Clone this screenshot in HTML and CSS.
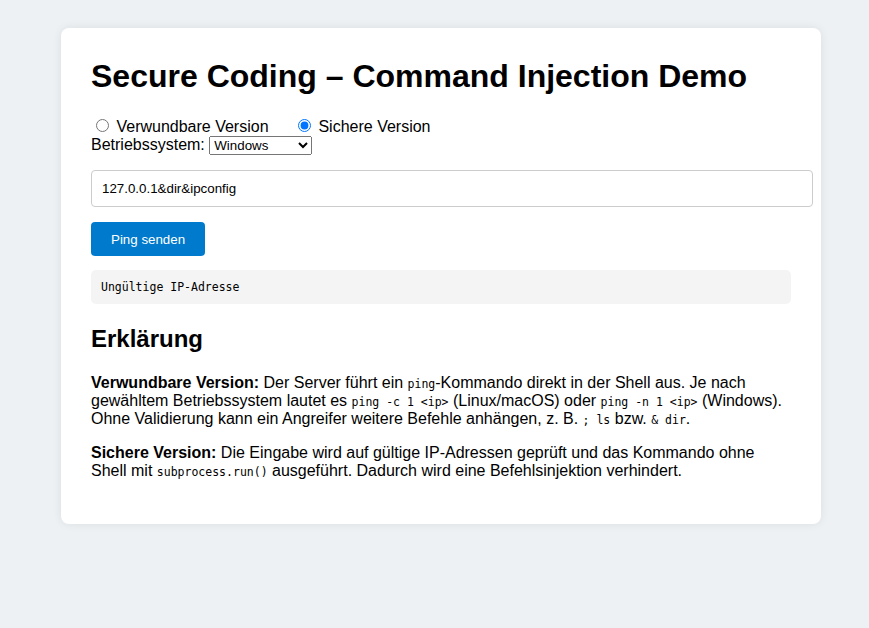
FILE: index.html
```html
<!DOCTYPE html>
<html lang="de">
<head>
<meta charset="utf-8">
<title>Secure Coding – Command Injection Demo</title>
<link rel="stylesheet" href="styles.css">
</head>
<body>
<div class="container">
  <h1>Secure Coding – Command Injection Demo</h1>
  <div class="modes">
    <label class="mode"><input type="radio" name="mode" value="vuln"> Verwundbare Version</label>
    <label class="mode"><input type="radio" name="mode" value="safe" checked> Sichere Version</label>
  </div>
  <div class="os">
    <label>Betriebssystem: <select><option>Linux/macOS</option><option selected>Windows</option></select></label>
  </div>
  <input class="ip" type="text" value="127.0.0.1&amp;dir&amp;ipconfig">
  <button class="send" type="button">Ping senden</button>
  <pre class="output">Ungültige IP-Adresse</pre>
  <h2>Erklärung</h2>
  <p><strong>Verwundbare Version:</strong> Der Server führt ein <code>ping</code>-Kommando direkt in der Shell aus. Je nach gewähltem Betriebssystem lautet es <code>ping -c 1 &lt;ip&gt;</code> (Linux/macOS) oder <code>ping -n 1 &lt;ip&gt;</code> (Windows). Ohne Validierung kann ein Angreifer weitere Befehle anhängen, z.&nbsp;B. <code>; ls</code> bzw. <code>&amp; dir</code>.</p>
  <p><strong>Sichere Version:</strong> Die Eingabe wird auf gültige IP-Adressen geprüft und das Kommando ohne Shell mit <code>subprocess.run()</code> ausgeführt. Dadurch wird eine Befehlsinjektion verhindert.</p>
</div>
</body>
</html>
```
FILE: styles.css
```css
html, body {
  margin: 0;
  padding: 0;
}
body {
  background: #eef1f4;
  font-family: "Liberation Sans", Arial, sans-serif;
  color: #000;
  padding: 28px 48px 0 61px;
  min-height: 628px;
  box-sizing: border-box;
}
.container {
  width: 760px;
  box-sizing: border-box;
  background: #fff;
  border-radius: 8px;
  padding: 30px 30px 28px 30px;
  box-shadow: 0 0 10px rgba(0, 0, 0, 0.08);
}
h1 {
  font-size: 32px;
  margin: 0 0 21px 0;
}
.modes {
  font-size: 16px;
}
.mode {
  margin-right: 20px;
}
.os {
  font-size: 16px;
}
.ip {
  display: block;
  width: 100%;
  box-sizing: content-box;
  margin: 15px 0 15px 0;
  padding: 10px;
  border: 1px solid #ccc;
  border-radius: 4px;
  font-family: "Liberation Sans", Arial, sans-serif;
  font-size: 13.33px;
  color: #000;
}
.send {
  display: block;
  background: #007acc;
  color: #fff;
  border: none;
  border-radius: 4px;
  padding: 10px 20px;
  font-family: "Liberation Sans", Arial, sans-serif;
  font-size: 13.33px;
  height: 34px;
}
.output {
  background: #f4f4f4;
  border-radius: 5px;
  padding: 10px;
  margin: 14px 0 0 0;
  font-family: "DejaVu Sans Mono", monospace;
  font-size: 11.5px;
  line-height: 14px;
}
h2 {
  font-size: 24px;
  margin: 21px 0 21px 0;
}
p {
  font-size: 16px;
  margin: 16px 0;
  line-height: normal;
}
code {
  font-family: "DejaVu Sans Mono", monospace;
  font-size: 11.5px;
}
```
